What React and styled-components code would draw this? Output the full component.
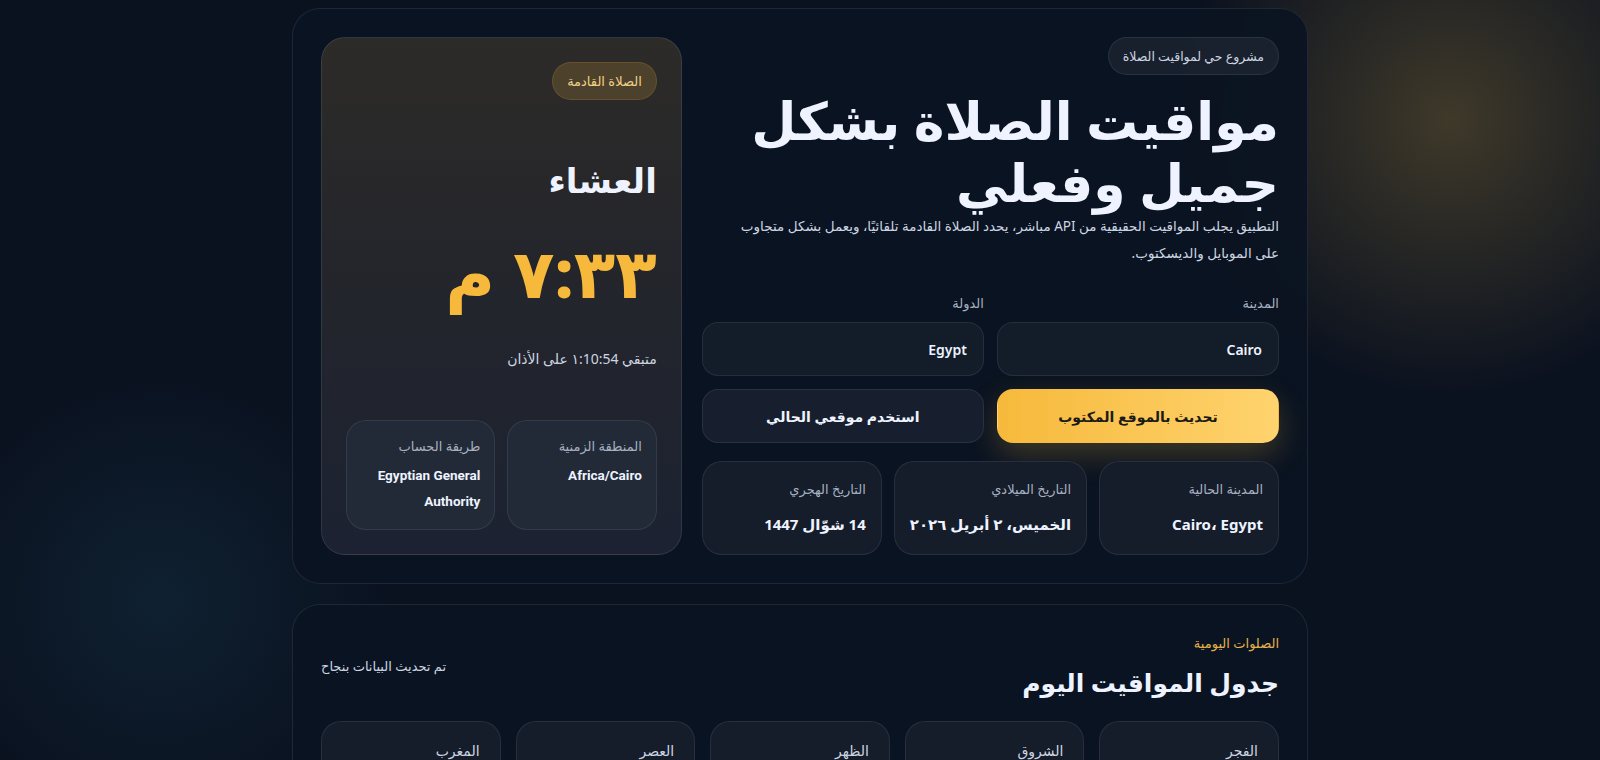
import React from "react";
import styled, { createGlobalStyle } from "styled-components";

const colors = {
  page: "#0a111f",
  card: "rgba(11, 19, 34, 0.92)",
  line: "rgba(148, 163, 184, 0.14)",
  tile: "#151c2a",
  white: "#eef3ff",
  text: "#cdd5e1",
  muted: "#a7b1c0",
  gold: "#f6b93b",
  goldSoft: "#ffd36e",
};

const GlobalStyle = createGlobalStyle`
  html, body {
    margin: 0;
    padding: 0;
  }
  body {
    min-height: 100vh;
    background-color: ${colors.page};
    background-image:
      radial-gradient(circle at 1450px 120px, rgba(222, 176, 72, 0.25), rgba(222, 176, 72, 0) 280px),
      radial-gradient(circle at 160px 600px, rgba(40, 115, 140, 0.16), rgba(40, 115, 140, 0) 240px);
    background-repeat: no-repeat;
    font-family: "Noto Sans", "DejaVu Sans", sans-serif;
    color: ${colors.white};
  }
  * {
    box-sizing: border-box;
  }
`;

const Page = styled.div`
  padding: 8px 0 40px;
`;

const Shell = styled.main`
  width: 1016px;
  margin: 0 auto;
  display: flex;
  flex-direction: column;
  gap: 20px;
`;

const Card = styled.section`
  background: ${colors.card};
  border: 1px solid ${colors.line};
  border-radius: 28px;
  padding: 28px;
`;

const HeroCard = styled(Card)`
  display: grid;
  grid-template-columns: 1.6fr 1fr;
  gap: 20px;
`;

const HeroMain = styled.div`
  display: flex;
  flex-direction: column;
  align-items: flex-start;
`;

const Badge = styled.span`
  display: inline-flex;
  align-items: center;
  height: 38px;
  padding: 0 14px;
  border-radius: 999px;
  background: rgba(255, 255, 255, 0.06);
  border: 1px solid ${colors.line};
  color: ${colors.text};
  font-size: 12.5px;
`;

const Title = styled.h1`
  margin: 14px 0 0;
  font-size: 52px;
  line-height: 62px;
  font-weight: 800;
  color: ${colors.white};
`;

const Lead = styled.p`
  margin: 0;
  max-width: 552px;
  font-size: 13.5px;
  line-height: 27px;
  color: ${colors.text};
`;

const FormGrid = styled.div`
  width: 100%;
  margin-top: 26px;
  display: grid;
  grid-template-columns: 1fr 1fr;
  gap: 13px;
`;

const Field = styled.label`
  display: flex;
  flex-direction: column;
  gap: 9px;
  color: ${colors.muted};
  font-size: 13px;
  line-height: 20px;
`;

const Input = styled.input`
  height: 54px;
  padding: 0 16px;
  border-radius: 16px;
  border: 1px solid ${colors.line};
  background: rgba(255, 255, 255, 0.04);
  color: ${colors.white};
  font-family: inherit;
  font-size: 14px;
  font-weight: 600;
  direction: rtl;
  outline: none;
`;

const Button = styled.button`
  height: 54px;
  border-radius: 16px;
  font-family: inherit;
  font-size: 14px;
  font-weight: 700;
  cursor: pointer;
  border: 1px solid ${(p) => (p.$primary ? "transparent" : colors.line)};
  color: ${(p) => (p.$primary ? "#1b1a17" : colors.white)};
  background: ${(p) =>
    p.$primary
      ? `linear-gradient(270deg, ${colors.goldSoft}, ${colors.gold})`
      : "#171f2e"};
  box-shadow: ${(p) =>
    p.$primary ? "0 12px 30px rgba(246, 185, 59, 0.22)" : "none"};
`;

const InfoGrid = styled.div`
  width: 100%;
  margin-top: 18px;
  display: grid;
  grid-template-columns: repeat(3, 1fr);
  gap: 12px;
`;

const Tile = styled.div`
  background: ${colors.tile};
  border: 1px solid ${colors.line};
  border-radius: 20px;
`;

const InfoCard = styled(Tile)`
  padding: 17px 15px;
  display: flex;
  flex-direction: column;
  gap: 12px;
`;

const TileLabel = styled.span`
  color: ${colors.muted};
  font-size: 13px;
  line-height: 20px;
`;

const InfoValue = styled.strong`
  color: ${colors.white};
  font-size: 15px;
  line-height: 26px;
  font-weight: 700;
  white-space: nowrap;
`;

const NextPanel = styled.aside`
  display: flex;
  flex-direction: column;
  align-items: flex-start;
  padding: 24px;
  border-radius: 24px;
  border: 1px solid rgba(148, 163, 184, 0.16);
  background: linear-gradient(180deg, #2d2b28 0%, #25262b 40%, #1c2232 100%);
`;

const Pill = styled.span`
  display: inline-flex;
  align-items: center;
  height: 38px;
  padding: 0 14px;
  border-radius: 999px;
  background: rgba(246, 185, 59, 0.17);
  border: 1px solid rgba(246, 185, 59, 0.14);
  color: #f0cf86;
  font-size: 13px;
`;

const PrayerName = styled.h2`
  margin: 58px 0 0;
  font-size: 34px;
  line-height: 44px;
  font-weight: 800;
  color: ${colors.white};
`;

const PrayerTime = styled.div`
  margin-top: 28px;
  font-size: 68px;
  line-height: 84px;
  font-weight: 800;
  color: ${colors.gold};
`;

const Countdown = styled.p`
  margin: 34px 0 0;
  font-size: 14px;
  line-height: 22px;
  color: ${colors.text};
`;

const MetaGrid = styled.div`
  width: 100%;
  margin-top: auto;
  display: grid;
  grid-template-columns: 1fr 1fr;
  gap: 12px;
`;

const MetaCard = styled(Tile)`
  min-height: 110px;
  padding: 15px 14px;
  display: flex;
  flex-direction: column;
  gap: 6px;
  background: #222a38;
`;

const MetaValue = styled.strong`
  color: ${colors.white};
  font-family: "Roboto", "DejaVu Sans", sans-serif;
  font-size: 13.5px;
  line-height: 26px;
  font-weight: 700;
`;

const ScheduleHead = styled.header`
  display: flex;
  justify-content: space-between;
  align-items: center;
`;

const Eyebrow = styled.span`
  display: block;
  color: #e4b24a;
  font-size: 13px;
  line-height: 20px;
`;

const SectionTitle = styled.h2`
  margin: 12px 0 0;
  font-size: 25px;
  line-height: 34px;
  font-weight: 800;
  color: ${colors.white};
`;

const Status = styled.span`
  color: ${colors.text};
  font-size: 13px;
`;

const PrayerGrid = styled.div`
  margin-top: 22px;
  display: grid;
  grid-template-columns: repeat(auto-fill, minmax(170px, 1fr));
  gap: 15px;
`;

const PrayerCard = styled(Tile)`
  padding: 20px 20px 22px;
  display: flex;
  flex-direction: column;
  gap: 14px;
`;

const PrayerLabel = styled.span`
  color: ${colors.text};
  font-size: 14px;
  line-height: 18px;
`;

const PrayerClock = styled.strong`
  color: ${colors.white};
  font-size: 26px;
  line-height: 34px;
`;

const info = [
  { label: "المدينة الحالية", value: "Cairo، Egypt" },
  { label: "التاريخ الميلادي", value: "الخميس، ٢ أبريل ٢٠٢٦" },
  { label: "التاريخ الهجري", value: "14 شوّال 1447" },
];

const prayers = [
  { name: "الفجر", time: "٤:١٤ ص" },
  { name: "الشروق", time: "٥:٤٣ ص" },
  { name: "الظهر", time: "١١:٥٨ ص" },
  { name: "العصر", time: "٣:٣٠ م" },
  { name: "المغرب", time: "٦:١٤ م" },
  { name: "العشاء", time: "٧:٣٣ م" },
];

export default function App() {
  return (
    <Page dir="rtl">
      <GlobalStyle />
      <Shell>
        <HeroCard>
          <HeroMain>
            <Badge>مشروع حي لمواقيت الصلاة</Badge>
            <Title>
              مواقيت الصلاة بشكل
              <br />
              جميل وفعلي
            </Title>
            <Lead>
              التطبيق يجلب المواقيت الحقيقية من API مباشر، يحدد الصلاة القادمة
              تلقائيًا، ويعمل بشكل متجاوب على الموبايل والديسكتوب.
            </Lead>
            <FormGrid>
              <Field>
                المدينة
                <Input defaultValue="Cairo" />
              </Field>
              <Field>
                الدولة
                <Input defaultValue="Egypt" />
              </Field>
              <Button $primary>تحديث بالموقع المكتوب</Button>
              <Button>استخدم موقعي الحالي</Button>
            </FormGrid>
            <InfoGrid>
              {info.map((item) => (
                <InfoCard key={item.label}>
                  <TileLabel>{item.label}</TileLabel>
                  <InfoValue>{item.value}</InfoValue>
                </InfoCard>
              ))}
            </InfoGrid>
          </HeroMain>

          <NextPanel>
            <Pill>الصلاة القادمة</Pill>
            <PrayerName>العشاء</PrayerName>
            <PrayerTime>٧:٣٣ م</PrayerTime>
            <Countdown>متبقي ١:10:54 على الأذان</Countdown>
            <MetaGrid>
              <MetaCard>
                <TileLabel>المنطقة الزمنية</TileLabel>
                <MetaValue>Africa/Cairo</MetaValue>
              </MetaCard>
              <MetaCard>
                <TileLabel>طريقة الحساب</TileLabel>
                <MetaValue>Egyptian General Authority</MetaValue>
              </MetaCard>
            </MetaGrid>
          </NextPanel>
        </HeroCard>

        <Card>
          <ScheduleHead>
            <div>
              <Eyebrow>الصلوات اليومية</Eyebrow>
              <SectionTitle>جدول المواقيت اليوم</SectionTitle>
            </div>
            <Status>تم تحديث البيانات بنجاح</Status>
          </ScheduleHead>
          <PrayerGrid>
            {prayers.map((p) => (
              <PrayerCard key={p.name}>
                <PrayerLabel>{p.name}</PrayerLabel>
                <PrayerClock>{p.time}</PrayerClock>
              </PrayerCard>
            ))}
          </PrayerGrid>
        </Card>
      </Shell>
    </Page>
  );
}
